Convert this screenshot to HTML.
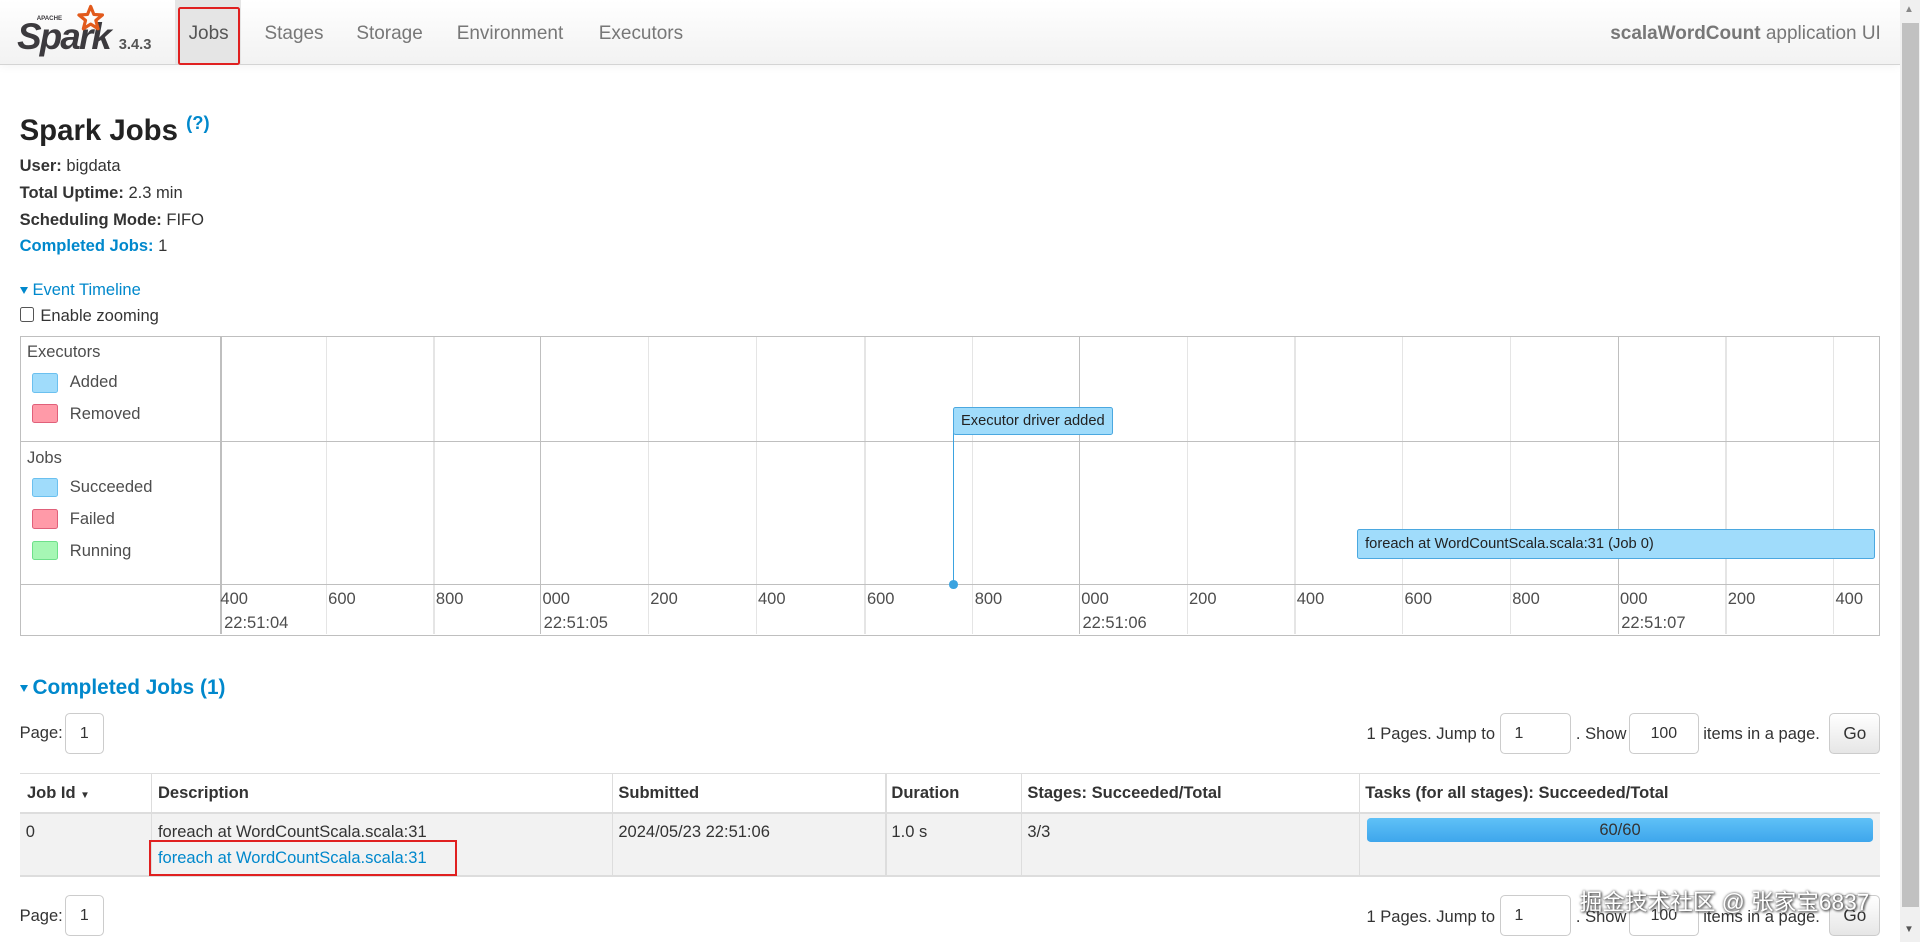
<!DOCTYPE html>
<html><head><meta charset="utf-8"><style>
html,body{margin:0;padding:0;width:1920px;height:942px;overflow:hidden;background:#fff}
#w{zoom:1.22449;position:relative;width:1568px;height:770px;font-family:"Liberation Sans","Noto Sans CJK SC",sans-serif;font-size:13.5px;color:#333}
.a{position:absolute;white-space:nowrap;line-height:20px}
.b{font-weight:bold}
.blue{color:#0088cc}
.nav{position:absolute;left:0;top:0;width:1552px;height:52px;background:linear-gradient(#fff,#f2f2f2);border-bottom:1px solid #d4d4d4;box-shadow:0 1px 8px rgba(0,0,0,.06)}
.tab{position:absolute;top:18px;font-size:15.5px;color:#777;line-height:20px;white-space:nowrap}
.box{position:absolute;border:1px solid #ccc;border-radius:4px;background:#fff;text-align:center;line-height:32px;font-size:13px}
.vl{position:absolute;top:275px;width:1px;height:243px;background:#e5e5e5}
.vm{background:#bfbfbf}
.lg{position:absolute;left:26px;width:20px;height:14px;border-radius:2px}
.tk{position:absolute;top:480px;font-size:13.5px;line-height:18px;color:#4d4d4d}
.th{position:absolute;top:631px;height:32px;line-height:32px;font-weight:bold}
.cl{position:absolute;top:632px;width:1px;height:84px;background:#ddd}
.tri{display:inline-block;width:0;height:0;border-left:4px solid transparent;border-right:4px solid transparent;border-top:6px solid #0088cc;vertical-align:middle;margin-right:4px}
</style></head><body><div id="w">
<div class="nav"></div>
<div style="position:absolute;left:143px;top:0;width:54px;height:52px;background:#e5e5e5"></div>
<div style="position:absolute;left:145px;top:6px;width:48px;height:44px;border:2px solid #e02020;border-radius:2px"></div>
<!-- logo -->
<div class="a" style="left:14px;top:14px;font-size:30px;font-weight:bold;font-style:italic;color:#3c3a3e;letter-spacing:-1.5px;line-height:32px">Spark</div>
<div class="a" style="left:30px;top:12px;font-size:5px;font-weight:bold;color:#3c3a3e;line-height:6px">APACHE</div>
<svg style="position:absolute;left:62px;top:3px" width="24" height="24" viewBox="0 0 24 24"><path d="M12 2l2.6 6.5 7 .5-5.4 4.4 1.8 6.8L12 16.4 6 20.2l1.8-6.8L2.4 9l7-.5z" fill="none" stroke="#e25a1c" stroke-width="2.6" stroke-linejoin="round"/></svg>
<div class="a" style="left:97px;top:27px;font-size:12px;font-weight:bold;color:#555">3.4.3</div>
<div class="tab" style="left:154px;color:#555">Jobs</div>
<div class="tab" style="left:216px">Stages</div>
<div class="tab" style="left:291px">Storage</div>
<div class="tab" style="left:373px">Environment</div>
<div class="tab" style="left:489px">Executors</div>
<div class="tab" style="left:1236px;width:300px;text-align:right;font-size:15.5px"><b>scalaWordCount</b> application UI</div>
<!-- scrollbar -->
<div style="position:absolute;left:1552px;top:0;width:16px;height:770px;background:#f0f0f0"></div>
<div style="position:absolute;left:1553px;top:19px;width:14px;height:722px;background:#c1c1c1"></div>
<div class="a" style="left:1555px;top:3px;font-size:8px;color:#888;line-height:10px">▲</div>
<div class="a" style="left:1555px;top:755px;font-size:8px;color:#555;line-height:10px">▼</div>

<div class="a b" style="left:16px;top:86px;font-size:24px;line-height:30px;color:#222">Spark Jobs <sup class="blue" style="font-size:15px">(?)</sup></div>
<div class="a" style="left:16px;top:126px"><b>User:</b> bigdata</div>
<div class="a" style="left:16px;top:148px"><b>Total Uptime:</b> 2.3 min</div>
<div class="a" style="left:16px;top:170px"><b>Scheduling Mode:</b> FIFO</div>
<div class="a" style="left:16px;top:191px"><b class="blue">Completed Jobs:</b> 1</div>
<div class="a blue" style="left:16px;top:227px"><span class="tri"></span>Event Timeline</div>
<div style="position:absolute;left:16px;top:251px;width:10px;height:10px;border:1px solid #555;border-radius:2px"></div>
<div class="a" style="left:33px;top:248px">Enable zooming</div>

<!-- timeline -->
<div style="position:absolute;left:16px;top:274px;width:1518px;height:244px;border:1px solid #bfbfbf"></div>
<div class="vl vm" style="left:180px"></div>
<div class="vl" style="left:266px"></div><div class="vl" style="left:354px"></div>
<div class="vl vm" style="left:441px"></div>
<div class="vl" style="left:529px"></div><div class="vl" style="left:617px"></div><div class="vl" style="left:706px"></div><div class="vl" style="left:794px"></div>
<div class="vl vm" style="left:881px"></div>
<div class="vl" style="left:969px"></div><div class="vl" style="left:1057px"></div><div class="vl" style="left:1145px"></div><div class="vl" style="left:1233px"></div>
<div class="vl vm" style="left:1321px"></div>
<div class="vl" style="left:1409px"></div><div class="vl" style="left:1497px"></div>
<div style="position:absolute;left:17px;top:360px;width:1518px;height:1px;background:#bfbfbf"></div>
<div style="position:absolute;left:17px;top:477px;width:1518px;height:1px;background:#bfbfbf"></div>
<div class="a" style="left:22px;top:278px;color:#4d4d4d">Executors</div>
<div class="lg" style="top:305px;background:#a0dcfb;border:1px solid #6bc0ef"></div><div class="a" style="left:57px;top:302px;color:#4d4d4d">Added</div>
<div class="lg" style="top:330px;background:#ff9aa8;border:1px solid #e0607a"></div><div class="a" style="left:57px;top:328px;color:#4d4d4d">Removed</div>
<div class="a" style="left:22px;top:364px;color:#4d4d4d">Jobs</div>
<div class="lg" style="top:390px;background:#a0dcfb;border:1px solid #6bc0ef"></div><div class="a" style="left:57px;top:388px;color:#4d4d4d">Succeeded</div>
<div class="lg" style="top:416px;background:#ff9aa8;border:1px solid #e0607a"></div><div class="a" style="left:57px;top:414px;color:#4d4d4d">Failed</div>
<div class="lg" style="top:442px;background:#a6f7b4;border:1px solid #6ee08a"></div><div class="a" style="left:57px;top:440px;color:#4d4d4d">Running</div>
<div style="position:absolute;left:778px;top:354px;width:1px;height:123px;background:#3ba3e0"></div>
<div style="position:absolute;left:775px;top:474px;width:7px;height:7px;border-radius:50%;background:#3ba3e0"></div>
<div class="a" style="left:778px;top:332px;height:22px;line-height:22px;padding:0 6px;background:#a0dcfb;border:1px solid #4ba8e0;border-radius:2px;font-size:12px;color:#222">Executor driver added</div>
<div class="a" style="left:1108px;top:432px;width:416px;height:23px;line-height:23px;padding:0 0 0 6px;background:#a0dcfb;border:1px solid #4ba8e0;border-radius:2px;font-size:12px;color:#222">foreach at WordCountScala.scala:31 (Job 0)</div>
<div class="tk" style="left:180px">400</div><div class="tk" style="left:268px">600</div><div class="tk" style="left:356px">800</div><div class="tk" style="left:443px">000</div><div class="tk" style="left:531px">200</div><div class="tk" style="left:619px">400</div><div class="tk" style="left:708px">600</div><div class="tk" style="left:796px">800</div><div class="tk" style="left:883px">000</div><div class="tk" style="left:971px">200</div><div class="tk" style="left:1059px">400</div><div class="tk" style="left:1147px">600</div><div class="tk" style="left:1235px">800</div><div class="tk" style="left:1323px">000</div><div class="tk" style="left:1411px">200</div><div class="tk" style="left:1499px">400</div>
<div class="tk" style="left:183px;top:500px">22:51:04</div><div class="tk" style="left:444px;top:500px">22:51:05</div><div class="tk" style="left:884px;top:500px">22:51:06</div><div class="tk" style="left:1324px;top:500px">22:51:07</div>

<div class="a b blue" style="left:16px;top:550px;font-size:17px;line-height:24px"><span class="tri"></span>Completed Jobs (1)</div>
<!-- pagination -->
<div class="a" style="left:16px;top:589px">Page:</div>
<div class="box" style="left:53px;top:582px;width:30px;height:32px">1</div>
<div class="a" style="left:1116px;top:590px">1 Pages. Jump to</div>
<div class="box" style="left:1225px;top:582px;width:56px;height:32px;text-align:left;text-indent:11px">1</div>
<div class="a" style="left:1287px;top:590px">. Show</div>
<div class="box" style="left:1330px;top:582px;width:56px;height:32px">100</div>
<div class="a" style="left:1391px;top:590px">items in a page.</div>
<div class="box" style="left:1494px;top:582px;width:40px;height:32px;background:linear-gradient(#fff,#e6e6e6);font-size:14px">Go</div>
<!-- table -->
<div style="position:absolute;left:16px;top:631px;width:1519px;height:1px;background:#ddd"></div>
<div style="position:absolute;left:16px;top:663px;width:1519px;height:53px;background:#f2f2f2;border-top:2px solid #ddd;border-bottom:2px solid #ddd;box-sizing:border-box"></div>
<div class="cl" style="left:123px"></div><div class="cl" style="left:500px"></div><div class="cl" style="left:723px"></div><div class="cl" style="left:834px"></div><div class="cl" style="left:1110px"></div>
<div class="th" style="left:22px">Job Id <span style="font-size:8px">▼</span></div>
<div class="th" style="left:129px">Description</div>
<div class="th" style="left:505px">Submitted</div>
<div class="th" style="left:728px">Duration</div>
<div class="th" style="left:839px">Stages: Succeeded/Total</div>
<div class="th" style="left:1115px">Tasks (for all stages): Succeeded/Total</div>
<div class="a" style="left:21px;top:670px">0</div>
<div class="a" style="left:129px;top:670px">foreach at WordCountScala.scala:31</div>
<div class="a blue" style="left:129px;top:691px">foreach at WordCountScala.scala:31</div>
<div style="position:absolute;left:122px;top:686px;width:248px;height:26px;border:2px solid #e02020"></div>
<div class="a" style="left:505px;top:670px">2024/05/23 22:51:06</div>
<div class="a" style="left:728px;top:670px">1.0 s</div>
<div class="a" style="left:839px;top:670px">3/3</div>
<div class="a" style="left:1116px;top:668px;width:414px;height:20px;background:linear-gradient(#5fc1f7,#3ea6ec);border-radius:3px;text-align:center;color:#333">60/60</div>
<!-- bottom pagination -->
<div class="a" style="left:16px;top:738px">Page:</div>
<div class="box" style="left:53px;top:731px;width:30px;height:32px">1</div>
<div class="a" style="left:1116px;top:739px">1 Pages. Jump to</div>
<div class="box" style="left:1225px;top:731px;width:56px;height:32px;text-align:left;text-indent:11px">1</div>
<div class="a" style="left:1287px;top:739px">. Show</div>
<div class="box" style="left:1330px;top:731px;width:56px;height:32px">100</div>
<div class="a" style="left:1391px;top:739px">items in a page.</div>
<div class="box" style="left:1494px;top:731px;width:40px;height:32px;background:linear-gradient(#fff,#e6e6e6);font-size:14px">Go</div>
<div class="a" style="left:1290px;top:723px;font-size:18.5px;line-height:28px;color:#fff;text-shadow:0 0 2px #555,1px 1px 2px #333">掘金技术社区 @ 张家宝6837</div>
</div></body></html>
